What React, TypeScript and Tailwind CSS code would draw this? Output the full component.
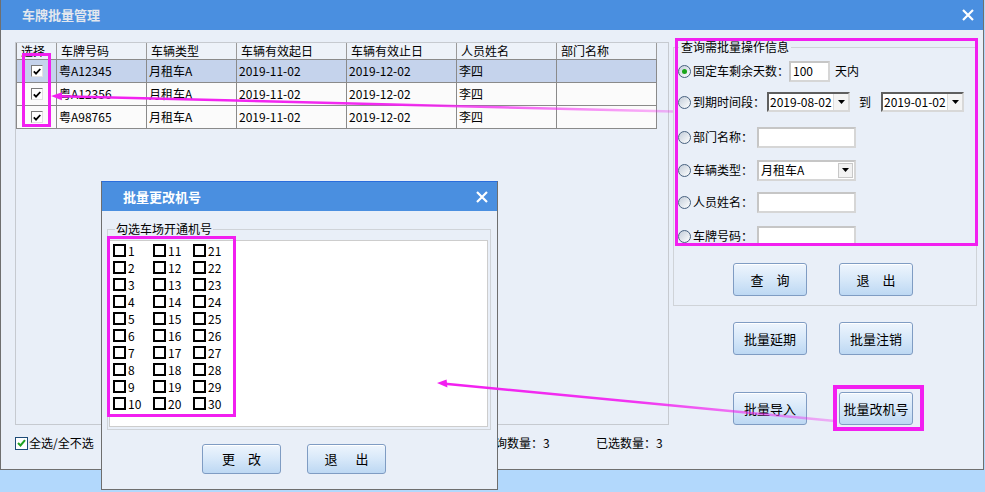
import * as React from "react";

type Row = {
  plate: string;
  type: string;
  start: string;
  end: string;
  name: string;
  dept: string;
  selected?: boolean;
};

const rows: Row[] = [
  { plate: "粤A12345", type: "月租车A", start: "2019-11-02", end: "2019-12-02", name: "李四", dept: "", selected: true },
  { plate: "粤A12356", type: "月租车A", start: "2019-11-02", end: "2019-12-02", name: "李四", dept: "" },
  { plate: "粤A98765", type: "月租车A", start: "2019-11-02", end: "2019-12-02", name: "李四", dept: "" },
];

const cols = [
  { title: "选择", w: "w-[40px]" },
  { title: "车牌号码", w: "w-[90px]" },
  { title: "车辆类型", w: "w-[90px]" },
  { title: "车辆有效起日", w: "w-[110px]" },
  { title: "车辆有效止日", w: "w-[110px]" },
  { title: "人员姓名", w: "w-[100px]" },
  { title: "部门名称", w: "w-[100px]" },
];

function CloseX() {
  return (
    <svg width="12" height="12" viewBox="0 0 12 12" className="shrink-0">
      <path d="M1 1L11 11M11 1L1 11" stroke="#fff" strokeWidth="2.2" />
    </svg>
  );
}

function Caret() {
  return (
    <svg width="7" height="4" viewBox="0 0 7 4">
      <path d="M0 0H7L3.5 4Z" fill="#000" />
    </svg>
  );
}

function Btn({ children, className = "" }: { children: React.ReactNode; className?: string }) {
  return (
    <div
      className={`flex items-center justify-center rounded-[3px] border border-[#7f9cc3] bg-linear-to-b from-[#eef5fd] via-[#d7e8f9] to-[#bdd8f3] text-[13px] leading-[16px] text-black shadow-[inset_0_1px_0_#ffffff] ${className}`}
    >
      {children}
    </div>
  );
}

function Radio({ on }: { on?: boolean }) {
  return (
    <span className="flex h-[13px] w-[13px] shrink-0 items-center justify-center rounded-full border border-[#47617f] bg-linear-to-br from-[#c3cdd9] to-white">
      {on && <span className="h-[5px] w-[5px] rounded-full bg-[#1aa51a]" />}
    </span>
  );
}

function Field({ value = "", className = "" }: { value?: string; className?: string }) {
  return (
    <div
      className={`flex h-[21px] items-center border-2 border-[#d6d6d6] border-t-[#c6c6c6] border-l-[#c6c6c6] bg-white pl-[2px] text-[12px] leading-[14px] ${className}`}
    >
      {value}
    </div>
  );
}

function DateCombo({ value }: { value: string }) {
  return (
    <div className="flex h-[20px] w-[83px] border-2 border-[#d8d8d8] border-t-[#5f5f5f] border-l-[#5f5f5f] bg-white">
      <span className="flex flex-1 items-center pl-[1px] text-[12px] leading-[14px]">{value}</span>
      <span className="flex w-[15px] items-center justify-center border-l border-[#dcdcdc] bg-[#f4f4f4]">
        <Caret />
      </span>
    </div>
  );
}

function TypeCombo({ value }: { value: string }) {
  return (
    <div className="flex h-[21px] w-[99px] border-2 border-[#d6d6d6] border-t-[#c6c6c6] border-l-[#c6c6c6] bg-white">
      <span className="flex flex-1 items-center pl-[2px] text-[12px] leading-[14px]">{value}</span>
      <span className="m-[1px] flex w-[15px] items-center justify-center border border-[#c8c8c8] bg-[#f2f2f2]">
        <Caret />
      </span>
    </div>
  );
}

function TickBox() {
  return (
    <span className="flex h-[12px] w-[12px] items-center justify-center border border-[#e2e2e2] border-t-[#7a7a7a] border-l-[#7a7a7a] bg-white">
      <svg width="8" height="7" viewBox="0 0 8 7">
        <path d="M0.8 3.4L3 5.6L7.3 1" stroke="#000" strokeWidth="1.8" fill="none" />
      </svg>
    </span>
  );
}

function GreenBox() {
  return (
    <span className="flex h-[13px] w-[13px] shrink-0 items-center justify-center border border-[#1d4b77] bg-white">
      <svg width="9" height="8" viewBox="0 0 9 8">
        <path d="M1 4L3.5 6.5L8 1.2" stroke="#21a321" strokeWidth="2" fill="none" />
      </svg>
    </span>
  );
}

function QueryRow({ label, w, mt, on, children }: { label: string; w: string; mt: string; on?: boolean; children: React.ReactNode }) {
  return (
    <div className={`flex h-[24px] items-center ${mt}`}>
      <Radio on={on} />
      <span className={`ml-[2px] whitespace-nowrap text-[12px] leading-[14px] ${w}`}>{label}</span>
      {children}
    </div>
  );
}

function Dialog() {
  const columns = [0, 1, 2];
  return (
    <div className="absolute left-[101px] top-[181px] flex h-[309px] w-[397px] flex-col border border-[#6e6e6e] border-t-[#2a6ddc] bg-[#e9eff8]">
      <div className="flex h-[29px] shrink-0 items-center justify-between bg-[#4a8fe0] pl-[21px] pr-[9px]">
        <span className="text-[13px] font-bold leading-[16px] text-white">批量更改机号</span>
        <CloseX />
      </div>
      <fieldset className="ml-[5px] mt-[11px] w-[384px] border border-[#cfd3d8] pb-[2px]">
        <legend className="ml-[7px] px-[1px] text-[12px] leading-[14px]">勾选车场开通机号</legend>
        <div className="ml-[1px] mt-[4px] flex h-[187px] w-[379px] border border-[#cdcdcd] bg-white pl-[3px] pt-[1px]">
          {columns.map((c) => (
            <div key={c} className="flex w-[40px] flex-col">
              {Array.from({ length: 10 }, (_, r) => (
                <div key={r} className="flex h-[17px] items-center">
                  <span className="h-[13px] w-[13px] shrink-0 border-2 border-black bg-white" />
                  <span className="ml-[2px] text-[12px] leading-[14px]">{c * 10 + r + 1}</span>
                </div>
              ))}
            </div>
          ))}
        </div>
      </fieldset>
      <div className="mt-[14px] flex gap-[26px] pl-[100px]">
        <Btn className="h-[30px] w-[79px]">更　改</Btn>
        <Btn className="h-[30px] w-[79px]">
          <span>退</span>
          <span className="ml-[18px]">出</span>
        </Btn>
      </div>
    </div>
  );
}

function Annotations() {
  return (
    <>
      <div className="absolute left-[22px] top-[53px] h-[74px] w-[29px] border-[3px] border-[#f21ff0]" />
      <div className="absolute left-[675px] top-[38px] h-[208px] w-[303px] border-[3px] border-[#f21ff0]" />
      <div className="absolute left-[107px] top-[236px] h-[181px] w-[129px] border-[3px] border-[#f21ff0]" />
      <div className="absolute left-[833px] top-[385px] h-[46px] w-[91px] border-4 border-[#f21ff0]" />
      <svg className="pointer-events-none absolute left-0 top-0" width="985" height="492" viewBox="0 0 985 492">
        <defs>
          <linearGradient id="a1" gradientUnits="userSpaceOnUse" x1="52" y1="96" x2="673" y2="112">
            <stop offset="0" stopColor="#f21ff0" stopOpacity="1" />
            <stop offset="0.55" stopColor="#f21ff0" stopOpacity="0.95" />
            <stop offset="1" stopColor="#f21ff0" stopOpacity="0.3" />
          </linearGradient>
          <linearGradient id="a2" gradientUnits="userSpaceOnUse" x1="437" y1="383" x2="835" y2="421">
            <stop offset="0" stopColor="#f21ff0" stopOpacity="1" />
            <stop offset="0.5" stopColor="#f21ff0" stopOpacity="0.9" />
            <stop offset="1" stopColor="#f21ff0" stopOpacity="0.3" />
          </linearGradient>
        </defs>
        <line x1="60" y1="96.2" x2="673" y2="111.5" stroke="url(#a1)" strokeWidth="2.5" />
        <polygon points="51,96 62.1,92.2 61.9,100.2" fill="#f21ff0" />
        <line x1="445" y1="383.8" x2="835" y2="421" stroke="url(#a2)" strokeWidth="2.5" />
        <polygon points="437,383 446.6,379.5 447.4,387.5" fill="#f21ff0" />
      </svg>
    </>
  );
}

export default function App() {
  return (
    <div className="relative h-[492px] w-[985px] overflow-hidden bg-[#b2d8fc] font-['Noto_Sans_CJK_SC','Noto_Sans',sans-serif] text-black">
      <div className="flex h-[470px] w-[984px] flex-col border-x border-b border-[#6f6f6f] bg-[#e9eff8]">
        {/* title bar */}
        <div className="flex h-[30px] shrink-0 items-center justify-between bg-[#4a8fe0] pl-[21px] pr-[9px]">
          <span className="text-[13px] font-bold leading-[16px] text-[#e3e7ee]">车牌批量管理</span>
          <CloseX />
        </div>

        <div className="mt-[12px] flex items-start">
          {/* list */}
          <div className="ml-[14px] h-[383px] w-[654px] border border-[#c6cad0]">
            <div className="w-[641px] border-l border-[#8a8a8a]">
              <div className="flex h-[17px] border-b border-[#8a8a8a] bg-[#edf2f9]">
                {cols.map((c) => (
                  <div key={c.title} className={`${c.w} flex items-center border-r border-[#9a9a9a] pl-[4px] text-[12px] leading-[14px]`}>
                    {c.title}
                  </div>
                ))}
              </div>
              {rows.map((r) => (
                <div
                  key={r.plate}
                  className={`flex h-[23px] border-b border-[#8a8a8a] text-[12px] leading-[14px] ${r.selected ? "bg-[#c5d3ec]" : "bg-[#fbfbfb]"}`}
                >
                  <div className="flex w-[40px] items-center justify-center border-r border-[#8a8a8a]">
                    <TickBox />
                  </div>
                  <div className="flex w-[90px] items-center border-r border-[#8a8a8a] pl-[2px]">{r.plate}</div>
                  <div className="flex w-[90px] items-center border-r border-[#8a8a8a] pl-[2px]">{r.type}</div>
                  <div className="flex w-[110px] items-center border-r border-[#8a8a8a] pl-[2px]">{r.start}</div>
                  <div className="flex w-[110px] items-center border-r border-[#8a8a8a] pl-[2px]">{r.end}</div>
                  <div className="flex w-[100px] items-center border-r border-[#8a8a8a] pl-[2px]">{r.name}</div>
                  <div className="flex w-[100px] items-center border-r border-[#8a8a8a] pl-[2px]">{r.dept}</div>
                </div>
              ))}
            </div>
          </div>

          {/* right column */}
          <div className="-mt-[2px] ml-[4px] w-[304px]">
            <fieldset className="border border-[#cfd3d8] pb-[9px]">
              <legend className="ml-[5px] px-[2px] text-[12px] leading-[14px]">查询需批量操作信息</legend>
              <div className="h-[190px] overflow-hidden pl-[4px]">
                <QueryRow label="固定车剩余天数：" w="w-[96px]" mt="mt-[5px]" on>
                  <Field value="100" className="w-[41px]" />
                  <span className="ml-[5px] text-[12px] leading-[14px]">天内</span>
                </QueryRow>
                <QueryRow label="到期时间段：" w="w-[74px]" mt="mt-[7px]">
                  <DateCombo value="2019-08-02" />
                  <span className="ml-[9px] text-[12px] leading-[14px]">到</span>
                  <span className="ml-[10px]">
                    <DateCombo value="2019-01-02" />
                  </span>
                </QueryRow>
                <QueryRow label="部门名称：" w="w-[64px]" mt="mt-[11px]">
                  <Field className="w-[99px]" />
                </QueryRow>
                <QueryRow label="车辆类型：" w="w-[64px]" mt="mt-[9px]">
                  <TypeCombo value="月租车A" />
                </QueryRow>
                <QueryRow label="人员姓名：" w="w-[64px]" mt="mt-[8px]">
                  <Field className="w-[99px]" />
                </QueryRow>
                <QueryRow label="车牌号码：" w="w-[64px]" mt="mt-[10px]">
                  <Field className="w-[99px]" />
                </QueryRow>
              </div>
              <div className="mt-[19px] flex gap-[32px] pl-[59px]">
                <Btn className="h-[33px] w-[74px]">查　询</Btn>
                <Btn className="h-[33px] w-[74px]">退　出</Btn>
              </div>
            </fieldset>
            <div className="mt-[16px] flex gap-[32px] pl-[60px]">
              <Btn className="h-[33px] w-[74px]">批量延期</Btn>
              <Btn className="h-[33px] w-[74px]">批量注销</Btn>
            </div>
            <div className="mt-[37px] flex gap-[32px] pl-[60px]">
              <Btn className="h-[33px] w-[74px]">批量导入</Btn>
              <Btn className="h-[33px] w-[74px]">批量改机号</Btn>
            </div>
          </div>
        </div>

        {/* footer */}
        <div className="mt-[11px] flex h-[14px] items-center text-[12px] leading-[14px]">
          <div className="flex w-[482px] items-center pl-[14px]">
            <GreenBox />
            <span className="ml-[1px]">全选/全不选</span>
          </div>
          <span className="w-[113px]">查询数量：3</span>
          <span>已选数量：3</span>
        </div>
      </div>

      <Dialog />
      <Annotations />
    </div>
  );
}
